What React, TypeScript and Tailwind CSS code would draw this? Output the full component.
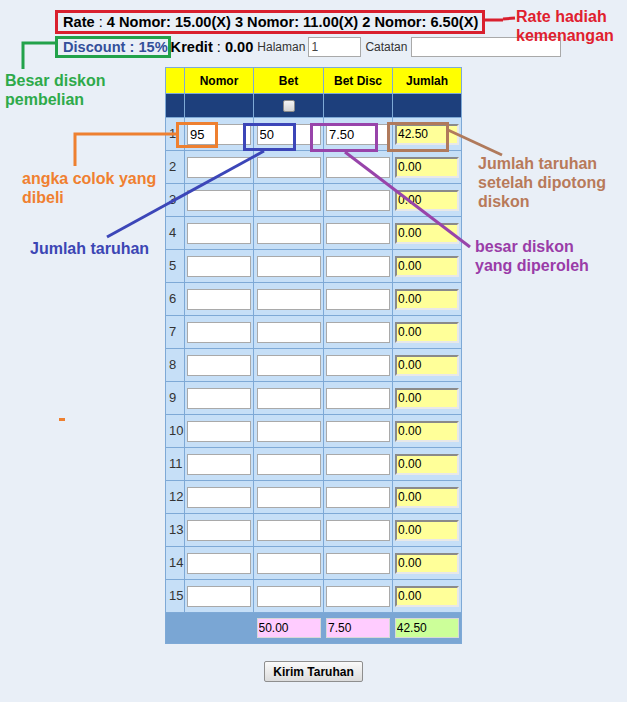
import React from "react";

const rows = Array.from({ length: 15 }, (_, i) => i + 1);

const inputBase =
  "h-[21px] w-[64px] border border-[#a9a9a9] bg-white px-[2px] text-[13px] text-black outline-none";

function Annotation({
  className,
  lines,
}: {
  className: string;
  lines: string[];
}) {
  return (
    <div className={`absolute text-[16px] font-bold leading-[19px] ${className}`}>
      {lines.map((l) => (
        <div key={l}>{l}</div>
      ))}
    </div>
  );
}

export default function App() {
  return (
    <div
      className="relative h-[702px] w-[627px] overflow-hidden bg-[#e9eff7] text-black"
      style={{ fontFamily: '"Liberation Sans", Arial, sans-serif' }}
    >
      {/* Header info */}
      <div className="pl-[63px] pt-[12px]">
        <div className="h-[20px] text-[14.6px] font-bold leading-[20px]">
          Rate<span className="font-normal"> : </span>4 Nomor: 15.00(X) 3 Nomor: 11.00(X) 2 Nomor: 6.50(X)
        </div>
        <div className="mt-[5px] flex h-[20px] items-center text-[14.6px] leading-[20px]">
          <span className="font-bold text-[#34509a]">Discount : 15%</span>
          <span className="ml-[3px] font-bold">
            Kredit<span className="font-normal"> : </span>0.00
          </span>
          <span className="ml-[4px] text-[12px] text-[#333]">Halaman</span>
          <input
            readOnly
            value="1"
            className="ml-[3px] h-[20px] w-[53px] border border-[#a9a9a9] bg-white px-[2px] text-[12px] text-[#444] outline-none"
          />
          <span className="ml-[4px] text-[12px] text-[#333]">Catatan</span>
          <input
            readOnly
            className="ml-[4px] h-[20px] w-[150px] border border-[#a9a9a9] bg-white outline-none"
          />
        </div>
      </div>

      {/* Table */}
      <div className="mt-[10px] flex justify-center">
        <table className="border-collapse border border-[#7ea9d6] text-[13px]">
          <thead>
            <tr className="h-[26px] bg-[#ffff00] text-[12px] font-bold">
              <th className="w-[19px] border border-[#7ea9d6]"></th>
              <th className="w-[69px] border border-[#7ea9d6]">Nomor</th>
              <th className="w-[70px] border border-[#7ea9d6]">Bet</th>
              <th className="w-[69px] border border-[#7ea9d6]">Bet Disc</th>
              <th className="w-[69px] border border-[#7ea9d6]">Jumlah</th>
            </tr>
            <tr className="h-[24px] bg-[#1d3f7c]">
              <td className="border border-[#7ea9d6]"></td>
              <td className="border border-[#7ea9d6]"></td>
              <td className="border border-[#7ea9d6] text-center">
                <span className="inline-block h-[12px] w-[12px] rounded-[2px] border border-[#8a8a8a] bg-gradient-to-b from-[#f4f4f4] to-[#d4d4d4] align-middle"></span>
              </td>
              <td className="border border-[#7ea9d6]"></td>
              <td className="border border-[#7ea9d6]"></td>
            </tr>
          </thead>
          <tbody>
            {rows.map((n) => (
              <tr key={n} className="h-[33px] bg-[#c6dff7]">
                <td className="border border-[#7ea9d6] pl-[3px] text-[13px] text-[#333]">{n}</td>
                <td className="border border-[#7ea9d6] text-center">
                  <input readOnly value={n === 1 ? "95" : ""} className={inputBase} />
                </td>
                <td className="border border-[#7ea9d6] text-center">
                  <input readOnly value={n === 1 ? "50" : ""} className={inputBase} />
                </td>
                <td className="border border-[#7ea9d6] text-center">
                  <input readOnly value={n === 1 ? "7.50" : ""} className={inputBase} />
                </td>
                <td className="border border-[#7ea9d6] text-center">
                  <input
                    readOnly
                    value={n === 1 ? "42.50" : "0.00"}
                    className="h-[21px] w-[64px] border-2 border-b-[#e8e8e8] border-l-[#8a8a8a] border-r-[#e8e8e8] border-t-[#8a8a8a] bg-[#ffff99] px-[1px] text-[12px] text-black outline-none"
                  />
                </td>
              </tr>
            ))}
            <tr className="h-[31px] bg-[#7aa6d4]">
              <td colSpan={2}></td>
              <td className="text-center">
                <input
                  readOnly
                  value="50.00"
                  className="h-[20px] w-[64px] border border-[#d8d8d8] bg-[#ffccff] px-[1px] text-[12px] text-black outline-none"
                />
              </td>
              <td className="text-center">
                <input
                  readOnly
                  value="7.50"
                  className="h-[20px] w-[64px] border border-[#d8d8d8] bg-[#ffccff] px-[1px] text-[12px] text-black outline-none"
                />
              </td>
              <td className="text-center">
                <input
                  readOnly
                  value="42.50"
                  className="h-[20px] w-[64px] border border-[#d8d8d8] bg-[#ccff99] px-[1px] text-[12px] text-black outline-none"
                />
              </td>
            </tr>
          </tbody>
        </table>
      </div>

      {/* Submit */}
      <div className="mt-[17px] flex justify-center">
        <button className="h-[21px] rounded-[2px] border border-[#8e8e8e] bg-gradient-to-b from-[#fafafa] to-[#dcdcdc] px-[8px] text-[12px] font-bold leading-[18px]">
          Kirim Taruhan
        </button>
      </div>

      {/* Annotation boxes (overlay) */}
      <div className="absolute left-[55px] top-[10px] h-[24px] w-[430px] border-[3px] border-[#d9202e]"></div>
      <div className="absolute left-[55px] top-[36px] h-[22px] w-[116px] border-[3px] border-[#22a24a]"></div>
      <div className="absolute left-[176px] top-[122px] h-[26px] w-[42px] border-[3px] border-[#ee8030]"></div>
      <div className="absolute left-[243px] top-[123px] h-[28px] w-[53px] border-[3px] border-[#3c46b8]"></div>
      <div className="absolute left-[310px] top-[123px] h-[29px] w-[68px] border-[3px] border-[#9844aa]"></div>
      <div className="absolute left-[387px] top-[122px] h-[30px] w-[62px] border-[3px] border-[#b07a5c]"></div>
      <div className="absolute left-[59px] top-[418px] h-[3px] w-[6px] bg-[#ee8030]"></div>

      {/* Leader lines */}
      <svg className="pointer-events-none absolute left-0 top-0" width="627" height="702">
        <path d="M485 20 L503 20 M503 19 L515 18" stroke="#d9202e" strokeWidth="3" fill="none" />
        <path d="M55 43 L23 43 L23 69" stroke="#22a24a" strokeWidth="3" fill="none" />
        <path d="M176 134 L75 134 L75 166" stroke="#ee8030" strokeWidth="3" fill="none" />
        <path d="M264 151 L107 237" stroke="#3c46b8" strokeWidth="3" fill="none" />
        <path d="M345 152 L470 247" stroke="#9844aa" strokeWidth="3" fill="none" />
        <path d="M448 130 L502 155" stroke="#b07a5c" strokeWidth="3" fill="none" />
      </svg>

      {/* Annotation labels */}
      <Annotation className="left-[516px] top-[7px] text-[#e0202e]" lines={["Rate hadiah", "kemenangan"]} />
      <Annotation className="left-[5px] top-[71px] text-[#2eaa4a]" lines={["Besar diskon", "pembelian"]} />
      <Annotation className="left-[22px] top-[169px] text-[#f08030]" lines={["angka colok yang", "dibeli"]} />
      <Annotation className="left-[30px] top-[239px] text-[#3c46b4]" lines={["Jumlah taruhan"]} />
      <Annotation className="left-[475px] top-[237px] text-[#9a3ca8]" lines={["besar diskon", "yang diperoleh"]} />
      <Annotation
        className="left-[478px] top-[154px] text-[#b87a5a]"
        lines={["Jumlah taruhan", "setelah dipotong", "diskon"]}
      />
    </div>
  );
}
